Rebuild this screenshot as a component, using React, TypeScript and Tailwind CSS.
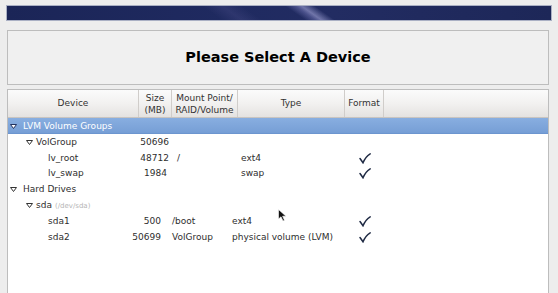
import React from "react";

const font = { fontFamily: '"DejaVu Sans", "Liberation Sans", sans-serif' };

function Tri({ white }: { white?: boolean }) {
  return (
    <svg width="7" height="5" viewBox="0 0 7 5" className="shrink-0">
      <path d="M0.5 0.5 L6.5 0.5 L3.5 4.5 Z" fill={white ? "#ffffff" : "none"} stroke={white ? "#24335e" : "#333"} strokeWidth="1" />
    </svg>
  );
}

function Check() {
  return (
    <svg width="12" height="11" viewBox="0 0 12 11">
      <path d="M1 5.5 L4 9.8 C5.6 5.8 8 2.8 11.2 0.8" fill="none" stroke="#1f2a44" strokeWidth="1.5" strokeLinecap="round" />
    </svg>
  );
}

type Row = {
  tri?: number;
  text: number;
  name: string;
  sub?: string;
  size?: string;
  sizeEnd?: number;
  mount?: string;
  mountStart?: number;
  type?: string;
  typeStart?: number;
  fmt?: boolean;
  sel?: boolean;
};

const rows: Row[] = [
  { tri: 2, text: 15, name: "LVM Volume Groups", sel: true },
  { tri: 18, text: 28, name: "VolGroup", size: "50696", sizeEnd: 162 },
  { text: 40, name: "lv_root", size: "48712", sizeEnd: 162, mount: "/", mountStart: 169, type: "ext4", typeStart: 233, fmt: true },
  { text: 40, name: "lv_swap", size: "1984", sizeEnd: 160, type: "swap", typeStart: 233, fmt: true },
  { tri: 2, text: 15, name: "Hard Drives" },
  { tri: 18, text: 28, name: "sda", sub: "(/dev/sda)" },
  { text: 40, name: "sda1", size: "500", sizeEnd: 154, mount: "/boot", mountStart: 164, type: "ext4", typeStart: 224, fmt: true },
  { text: 40, name: "sda2", size: "50699", sizeEnd: 154, mount: "VolGroup", mountStart: 164, type: "physical volume (LVM)", typeStart: 224, fmt: true },
];

export default function App() {
  return (
    <div className="w-[558px] h-[293px] overflow-hidden bg-[#ededed] relative" style={font}>
      <div className="pt-[5px] pl-[6px]">
        <div
          className="w-[546px] h-[16px] border border-[#aab0c4] relative overflow-hidden"
          style={{ background: "linear-gradient(90deg,#1b2557 0%,#1f2a60 40%,#222c62 60%,#1d2758 100%)" }}
        >
          <div
            className="absolute top-0 h-full w-[30px]"
            style={{ left: 288, background: "linear-gradient(90deg,transparent 0%,rgba(150,150,215,0.35) 35%,rgba(190,190,240,0.5) 55%,transparent 100%)", transform: "skewX(55deg)" }}
          />
          <div
            className="absolute top-0 h-full w-[40px]"
            style={{ left: 205, background: "linear-gradient(90deg,transparent,rgba(90,90,150,0.25),transparent)", transform: "skewX(55deg)" }}
          />
        </div>
      </div>
      <div className="mt-[9px] ml-[7px] w-[542px] h-[55px] border border-[#bdbdbd] bg-[#f0f0f0] flex items-center justify-center">
        <span className="text-[14.5px] font-bold text-black">Please Select A Device</span>
      </div>
      <div className="mt-[4px] ml-[7px] w-[542px] h-[210px] border border-[#bdbdbd] bg-white text-[9px] text-[#2e2e2e]">
        <div
          className="flex h-[28px] border-b border-[#c8c4c0] text-[#333]"
          style={{ background: "linear-gradient(180deg,#fbfbfb 0%,#f2f1f0 50%,#e4e2e0 100%)" }}
        >
          <div className="w-[131px] flex items-center justify-center border-r border-[#d0cdca]">Device</div>
          <div className="w-[33px] flex flex-col items-center justify-center leading-[12px] border-r border-[#d0cdca]">
            <span>Size</span>
            <span>(MB)</span>
          </div>
          <div className="w-[66px] flex flex-col items-center justify-center leading-[12px] border-r border-[#d0cdca] whitespace-nowrap">
            <span>Mount Point/</span>
            <span>RAID/Volume</span>
          </div>
          <div className="w-[107px] flex items-center justify-center border-r border-[#d0cdca]">Type</div>
          <div className="w-[39px] flex items-center justify-center border-r border-[#d0cdca]">Format</div>
          <div className="flex-1" />
        </div>
        {rows.map((r, i) => (
          <div
            key={i}
            className={`relative h-[15.8px] whitespace-nowrap ${r.sel ? "text-white" : ""}`}
            style={r.sel ? { background: "linear-gradient(180deg,#88aee0 0%,#779fd6 90%,#6791cc 100%)" } : undefined}
          >
            {r.tri !== undefined && (
              <span className="absolute top-[6px]" style={{ left: r.tri }}>
                <Tri white={r.sel} />
              </span>
            )}
            <span className="absolute top-[2px]" style={{ left: r.text }}>
              {r.name}
              {r.sub && <span className="text-[7px] text-[#b5b5b5] ml-[3px]">{r.sub}</span>}
            </span>
            {r.size && (
              <span className="absolute top-[2px] text-right" style={{ right: 541 - r.sizeEnd! }}>
                {r.size}
              </span>
            )}
            {r.mount && (
              <span className="absolute top-[2px]" style={{ left: r.mountStart }}>
                {r.mount}
              </span>
            )}
            {r.type && (
              <span className="absolute top-[2px]" style={{ left: r.typeStart }}>
                {r.type}
              </span>
            )}
            {r.fmt && (
              <span className="absolute top-[3px] left-[351px]">
                <Check />
              </span>
            )}
          </div>
        ))}
      </div>
      <svg className="absolute" style={{ left: 278, top: 209 }} width="9" height="13" viewBox="0 0 9 13">
        <path d="M0.5 0.5 L0.5 10 L3 7.8 L5 12 L6.5 11.3 L4.6 7.2 L8 7.2 Z" fill="#111" stroke="#fff" strokeWidth="0.6" />
      </svg>
    </div>
  );
}
